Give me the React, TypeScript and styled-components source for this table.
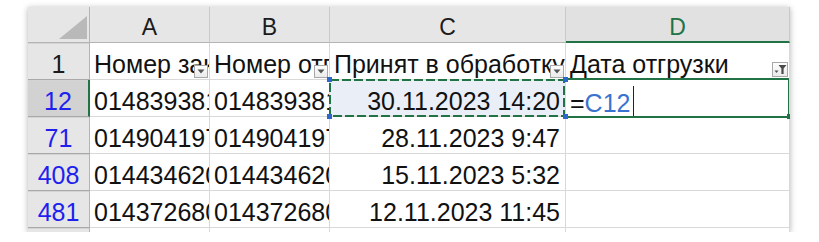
import React from "react";
import styled, { createGlobalStyle } from "styled-components";

const GlobalStyle = createGlobalStyle`
  html, body {
    margin: 0;
    padding: 0;
    background: #ffffff;
  }
  body {
    font-family: "Liberation Sans", Arial, sans-serif;
  }
`;

const GREEN = "#217346";
const GRID = "#d9d9d9";
const HEAD_BG = "#e6e6e6";
const HEAD_LINE = "#b4b4b4";

const Page = styled.div`
  padding: 7px 0 0 28px;
`;

const Sheet = styled.div`
  display: grid;
  grid-template-columns: 62px 120px 120px 236px 224px;
  grid-template-rows: 36px repeat(5, 37px) 4px;
  width: 762px;
  background: #fff;
  box-shadow: 0 1px 6px rgba(0, 0, 0, 0.3);
  overflow: hidden;
`;

const Corner = styled.div`
  display: flex;
  justify-content: flex-end;
  align-items: flex-end;
  padding: 0 2px 3px 0;
  box-sizing: border-box;
  background: ${HEAD_BG};
  border-right: 1px solid ${HEAD_LINE};
  border-bottom: 1px solid ${HEAD_LINE};
`;

const CornerTriangle = styled.span`
  width: 28px;
  height: 23px;
  background: #b9b9b9;
  clip-path: polygon(100% 0, 100% 100%, 0 100%);
`;

const ColHead = styled.div<{ $active?: boolean }>`
  box-sizing: border-box;
  padding-top: 4px;
  line-height: 32px;
  font-size: 23px;
  text-align: center;
  color: ${(p) => (p.$active ? GREEN : "#1b1b1b")};
  background: ${(p) => (p.$active ? "#e1e1e1" : HEAD_BG)};
  border-right: 1px solid #c9c9c9;
  border-bottom: ${(p) => (p.$active ? `2px solid ${GREEN}` : `1px solid ${HEAD_LINE}`)};
`;

const RowHead = styled.div<{ $active?: boolean; $filtered?: boolean }>`
  box-sizing: border-box;
  padding-top: 6px;
  line-height: 30px;
  font-size: 25px;
  text-align: center;
  overflow: hidden;
  color: ${(p) => (p.$filtered ? "#1f1ff0" : "#1b1b1b")};
  background: ${(p) => (p.$active ? "#d2d2d2" : HEAD_BG)};
  border-right: ${(p) => (p.$active ? `2px solid ${GREEN}` : `1px solid ${HEAD_LINE}`)};
  border-bottom: 1px solid #a9a9a9;
  box-shadow: inset 0 1px 0 #d4d4d4;
`;

const Cell = styled.div<{ $align?: "left" | "right"; $tone?: "ref" }>`
  position: relative;
  box-sizing: border-box;
  padding: 6px ${(p) => (p.$align === "right" ? "5px" : "0")} 0 4px;
  line-height: 30px;
  font-size: 25px;
  color: #111;
  white-space: nowrap;
  overflow: hidden;
  text-align: ${(p) => p.$align ?? "left"};
  background: ${(p) => (p.$tone === "ref" ? "#e9eef7" : "#fff")};
  border-right: 1px solid ${GRID};
  border-bottom: 1px solid ${GRID};
`;

const RefCell = styled(Cell)`
  overflow: visible;
  z-index: 2;
`;

const ActiveCell = styled(Cell)`
  overflow: visible;
  z-index: 1;
`;

/* dashed copy-style frame around the referenced cell */
const Ants = styled.svg`
  position: absolute;
  left: -1px;
  top: -1px;
  width: calc(100% + 1px);
  height: calc(100% + 1px);
  overflow: visible;
  pointer-events: none;
`;

const Handle = styled.span<{ $x: "left" | "right"; $y: "top" | "bottom"; $color?: string }>`
  position: absolute;
  width: 5px;
  height: 5px;
  background: ${(p) => p.$color ?? "#2f66c9"};
  ${(p) => p.$x}: -3px;
  ${(p) => p.$y}: -3px;
`;

const ActiveFrame = styled.span`
  position: absolute;
  left: -2px;
  right: 0;
  top: -2px;
  bottom: -2px;
  border-top: 2px solid ${GREEN};
  border-bottom: 2px solid ${GREEN};
  border-right: 1px solid ${GREEN};
  pointer-events: none;
`;

const RefText = styled.span`
  color: #3a73cf;
`;

const Caret = styled.span`
  display: inline-block;
  width: 1px;
  height: 32px;
  margin-left: 3px;
  vertical-align: -6px;
  background: #222;
`;

const FilterButton = styled.span<{ $wide?: boolean }>`
  position: absolute;
  right: 1px;
  bottom: ${(p) => (p.$wide ? "2px" : "1px")};
  width: ${(p) => (p.$wide ? "16px" : "14px")};
  height: ${(p) => (p.$wide ? "15px" : "13px")};
  box-sizing: border-box;
  display: flex;
  align-items: center;
  justify-content: center;
  border: 1px solid #a8a8a8;
  background: linear-gradient(#fdfdfd, #ebebeb);
`;

const DropArrow = () => (
  <svg width="8" height="5" viewBox="0 0 8 5">
    <path d="M0.5 0.5h7L4 4.5z" fill="#555" />
  </svg>
);

const FunnelIcon = () => (
  <svg width="13" height="11" viewBox="0 0 13 11">
    <path d="M0.5 6.5h4L2.5 9z" fill="#555" />
    <path d="M4.5 1h8L9.6 4.6V10H7.4V4.6z" fill="#4a4a4a" />
  </svg>
);

type Row = {
  num: string;
  a: string;
  b: string;
  c: string;
};

const rows: Row[] = [
  { num: "71", a: "0149041973", b: "0149041973", c: "28.11.2023 9:47" },
  { num: "408", a: "0144346205", b: "0144346205", c: "15.11.2023 5:32" },
  { num: "481", a: "0143726806", b: "0143726806", c: "12.11.2023 11:45" },
];

export default function App() {
  return (
    <>
      <GlobalStyle />
      <Page>
        <Sheet>
          <Corner>
            <CornerTriangle />
          </Corner>
          <ColHead>A</ColHead>
          <ColHead>B</ColHead>
          <ColHead>C</ColHead>
          <ColHead $active>D</ColHead>

          <RowHead>1</RowHead>
          <Cell>
            Номер заказа
            <FilterButton>
              <DropArrow />
            </FilterButton>
          </Cell>
          <Cell>
            Номер отправления
            <FilterButton>
              <DropArrow />
            </FilterButton>
          </Cell>
          <Cell>
            Принят в обработку
            <FilterButton>
              <DropArrow />
            </FilterButton>
          </Cell>
          <Cell>
            Дата отгрузки
            <FilterButton $wide>
              <FunnelIcon />
            </FilterButton>
          </Cell>

          <RowHead $active $filtered>
            12
          </RowHead>
          <Cell>0148393812</Cell>
          <Cell>0148393812</Cell>
          <RefCell $align="right" $tone="ref">
            30.11.2023 14:20
            <Ants preserveAspectRatio="none">
              <rect
                x="1"
                y="1"
                width="234"
                height="36"
                fill="none"
                stroke={GREEN}
                strokeWidth="2"
                strokeDasharray="9 3"
              />
            </Ants>
            <Handle $x="left" $y="top" />
            <Handle $x="right" $y="top" />
            <Handle $x="left" $y="bottom" />
            <Handle $x="right" $y="bottom" />
          </RefCell>
          <ActiveCell>
            =<RefText>C12</RefText>
            <Caret />
            <ActiveFrame />
            <Handle $x="right" $y="bottom" $color={GREEN} />
          </ActiveCell>

          {rows.map((r) => (
            <React.Fragment key={r.num}>
              <RowHead $filtered>{r.num}</RowHead>
              <Cell>{r.a}</Cell>
              <Cell>{r.b}</Cell>
              <Cell $align="right">{r.c}</Cell>
              <Cell />
            </React.Fragment>
          ))}

          <RowHead />
          <Cell />
          <Cell />
          <Cell />
          <Cell />
        </Sheet>
      </Page>
    </>
  );
}
